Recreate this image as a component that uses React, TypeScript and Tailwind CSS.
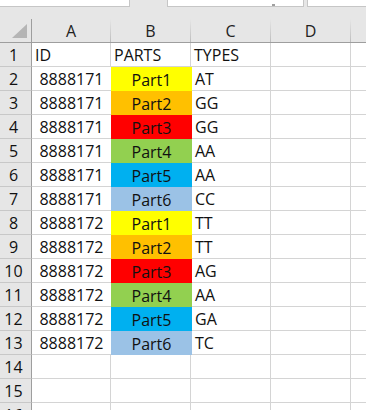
import React from "react";

type Row = { id: string; part: string; fill: string; type: string };

const rows: Row[] = [
  { id: "8888171", part: "Part1", fill: "bg-[#ffff00]", type: "AT" },
  { id: "8888171", part: "Part2", fill: "bg-[#ffc000]", type: "GG" },
  { id: "8888171", part: "Part3", fill: "bg-[#ff0000]", type: "GG" },
  { id: "8888171", part: "Part4", fill: "bg-[#92d050]", type: "AA" },
  { id: "8888171", part: "Part5", fill: "bg-[#00b0f0]", type: "AA" },
  { id: "8888171", part: "Part6", fill: "bg-[#9bc2e6]", type: "CC" },
  { id: "8888172", part: "Part1", fill: "bg-[#ffff00]", type: "TT" },
  { id: "8888172", part: "Part2", fill: "bg-[#ffc000]", type: "TT" },
  { id: "8888172", part: "Part3", fill: "bg-[#ff0000]", type: "AG" },
  { id: "8888172", part: "Part4", fill: "bg-[#92d050]", type: "AA" },
  { id: "8888172", part: "Part5", fill: "bg-[#00b0f0]", type: "GA" },
  { id: "8888172", part: "Part6", fill: "bg-[#9bc2e6]", type: "TC" },
];

function HeaderCell({ label, w }: { label: string; w: string }) {
  return (
    <div className={`flex h-full ${w} shrink-0`}>
      <div className="flex flex-1 items-center justify-center pt-[1px]">{label}</div>
      <div className="w-px h-full bg-gradient-to-b from-[#e6e6e6] to-[#bdbdbd]" />
    </div>
  );
}

function RowNum({ n }: { n: number }) {
  return (
    <div className="flex w-[32px] shrink-0 h-full bg-[#e6e6e6] border-r border-[#9e9e9e] border-b border-b-[#c8c8c8] items-center justify-center pr-[4px] pt-[1px]">
      {n}
    </div>
  );
}

const cell = "shrink-0 border-r border-b border-[#d4d4d4] flex items-center pt-[1px]";

export default function App() {
  const empty = [14, 15, 16];
  return (
    <div
      className="w-[366px] h-[410px] overflow-hidden bg-white text-[16px] leading-none text-[#111]"
      style={{ fontFamily: "'Open Sans', 'Noto Sans', sans-serif" }}
    >
      {/* top strip */}
      <div className="flex h-[19px] bg-[#e6e6e6]">
        <div className="w-[130px] h-[7px] bg-white border-r border-b border-[#c6c6c6] shrink-0" />
        <div className="w-[37px] shrink-0" />
        <div className="relative w-[137px] h-[7px] bg-white border-l border-r border-b border-[#c6c6c6] shrink-0">
          <div className="absolute left-[104px] top-[4px] w-[3px] h-[2px] bg-[#a0a0a0]" />
        </div>
        <div className="w-[3px] shrink-0" />
        <div className="flex-1 h-[7px] bg-white border-l border-b border-[#c6c6c6]" />
      </div>
      {/* column header */}
      <div className="flex h-[24px] bg-[#e6e6e6] border-b border-[#9e9e9e] text-[#222]">
        <div className="relative w-[32px] shrink-0 h-full border-r border-[#9e9e9e]">
          <svg className="absolute left-[12px] top-[5px]" width="15" height="14" viewBox="0 0 15 14">
            <polygon points="15,0 15,14 0,14" fill="#b5b5b5" />
          </svg>
        </div>
        <HeaderCell label="A" w="w-[79px]" />
        <HeaderCell label="B" w="w-[80px]" />
        <HeaderCell label="C" w="w-[80px]" />
        <HeaderCell label="D" w="w-[80px]" />
        <div className="flex-1" />
      </div>
      {/* row 1 */}
      <div className="flex h-[24px]">
        <RowNum n={1} />
        <div className={`w-[79px] pl-[3px] ${cell}`}>ID</div>
        <div className={`w-[80px] pl-[3px] ${cell}`}>PARTS</div>
        <div className={`w-[80px] pl-[3px] ${cell}`}>TYPES</div>
        <div className={`w-[80px] ${cell}`} />
        <div className="flex-1 border-b border-[#d4d4d4]" />
      </div>
      {rows.map((r, i) => (
        <div key={i} className="flex h-[24px]">
          <RowNum n={i + 2} />
          <div className="w-[79px] shrink-0 border-b border-[#d4d4d4] flex items-center justify-center pt-[1px]">{r.id}</div>
          <div className={`w-[81px] shrink-0 flex items-center justify-center pt-[1px] ${r.fill}`}>{r.part}</div>
          <div className={`w-[79px] pl-[3px] ${cell}`}>{r.type}</div>
          <div className={`w-[80px] ${cell}`} />
          <div className="flex-1 border-b border-[#d4d4d4]" />
        </div>
      ))}
      {empty.map((n) => (
        <div key={n} className="flex h-[24px]">
          <RowNum n={n} />
          <div className={`w-[79px] ${cell}`} />
          <div className={`w-[80px] ${cell}`} />
          <div className={`w-[80px] ${cell}`} />
          <div className={`w-[80px] ${cell}`} />
          <div className="flex-1 border-b border-[#d4d4d4]" />
        </div>
      ))}
    </div>
  );
}
